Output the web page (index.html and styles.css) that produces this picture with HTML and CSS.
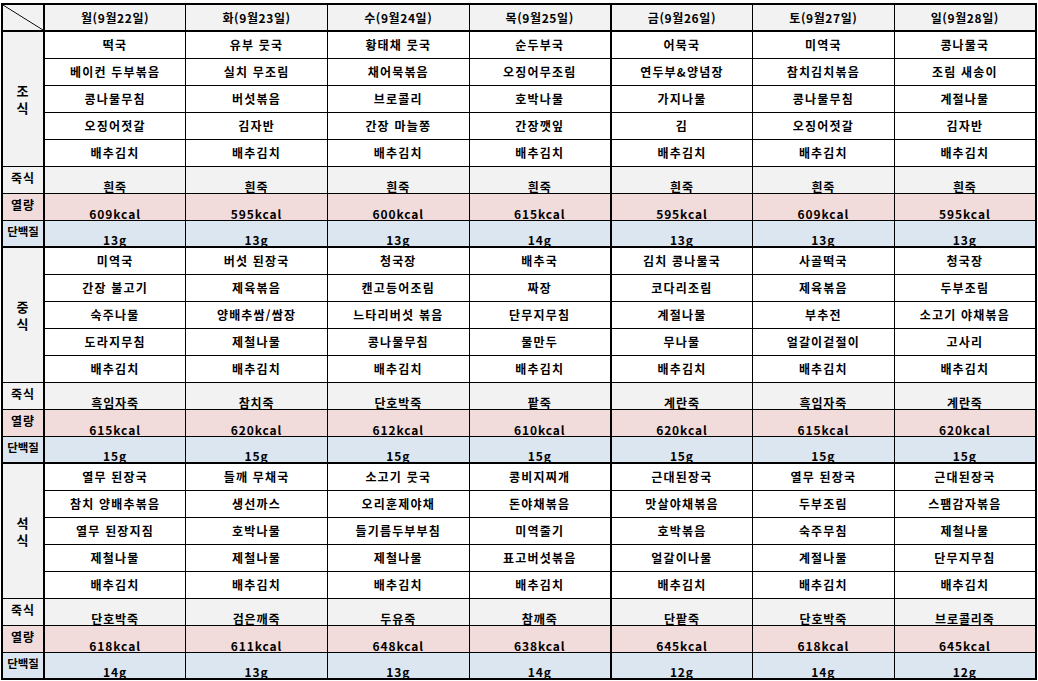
FILE: index.html
```html
<!DOCTYPE html>
<html lang="ko">
<head>
<meta charset="utf-8">
<title>주간 식단표</title>
<link rel="stylesheet" href="styles.css">
</head>
<body>
<table class="menu">
  <colgroup>
    <col class="c-lab">
    <col class="c-day"><col class="c-day"><col class="c-day"><col class="c-day"><col class="c-day"><col class="c-day"><col class="c-day">
  </colgroup>
  <thead>
    <tr class="head">
      <th class="corner"></th>
      <th>월(9월22일)</th><th>화(9월23일)</th><th>수(9월24일)</th><th class="mid">목(9월25일)</th><th>금(9월26일)</th><th>토(9월27일)</th><th>일(9월28일)</th>
    </tr>
  </thead>
  <tbody>
    <tr class="meal first">
      <td class="lab sec" rowspan="5">조<br>식</td>
      <td>떡국</td><td>유부 뭇국</td><td>황태채 뭇국</td><td class="mid">순두부국</td><td>어묵국</td><td>미역국</td><td>콩나물국</td>
    </tr>
    <tr class="meal"><td>베이컨 두부볶음</td><td>실치 무조림</td><td>채어묵볶음</td><td class="mid">오징어무조림</td><td>연두부&amp;양념장</td><td>참치김치볶음</td><td>조림 새송이</td></tr>
    <tr class="meal"><td>콩나물무침</td><td>버섯볶음</td><td>브로콜리</td><td class="mid">호박나물</td><td>가지나물</td><td>콩나물무침</td><td>계절나물</td></tr>
    <tr class="meal"><td>오징어젓갈</td><td>김자반</td><td>간장 마늘쫑</td><td class="mid">간장깻잎</td><td>김</td><td>오징어젓갈</td><td>김자반</td></tr>
    <tr class="meal"><td>배추김치</td><td>배추김치</td><td>배추김치</td><td class="mid">배추김치</td><td>배추김치</td><td>배추김치</td><td>배추김치</td></tr>
    <tr class="info porridge"><td class="lab">죽식</td><td><span>흰죽</span></td><td><span>흰죽</span></td><td><span>흰죽</span></td><td class="mid"><span>흰죽</span></td><td><span>흰죽</span></td><td><span>흰죽</span></td><td><span>흰죽</span></td></tr>
    <tr class="info kcal"><td class="lab">열량</td><td><span>609kcal</span></td><td><span>595kcal</span></td><td><span>600kcal</span></td><td class="mid"><span>615kcal</span></td><td><span>595kcal</span></td><td><span>609kcal</span></td><td><span>595kcal</span></td></tr>
    <tr class="info prot"><td class="lab">단백질</td><td><span>13g</span></td><td><span>13g</span></td><td><span>13g</span></td><td class="mid"><span>14g</span></td><td><span>13g</span></td><td><span>13g</span></td><td><span>13g</span></td></tr>

    <tr class="meal first">
      <td class="lab sec" rowspan="5">중<br>식</td>
      <td>미역국</td><td>버섯 된장국</td><td>청국장</td><td class="mid">배추국</td><td>김치 콩나물국</td><td>사골떡국</td><td>청국장</td>
    </tr>
    <tr class="meal"><td>간장 불고기</td><td>제육볶음</td><td>캔고등어조림</td><td class="mid">짜장</td><td>코다리조림</td><td>제육볶음</td><td>두부조림</td></tr>
    <tr class="meal"><td>숙주나물</td><td>양배추쌈/쌈장</td><td>느타리버섯 볶음</td><td class="mid">단무지무침</td><td>계절나물</td><td>부추전</td><td>소고기 야채볶음</td></tr>
    <tr class="meal"><td>도라지무침</td><td>제철나물</td><td>콩나물무침</td><td class="mid">물만두</td><td>무나물</td><td>얼갈이겉절이</td><td>고사리</td></tr>
    <tr class="meal"><td>배추김치</td><td>배추김치</td><td>배추김치</td><td class="mid">배추김치</td><td>배추김치</td><td>배추김치</td><td>배추김치</td></tr>
    <tr class="info porridge"><td class="lab">죽식</td><td><span>흑임자죽</span></td><td><span>참치죽</span></td><td><span>단호박죽</span></td><td class="mid"><span>팥죽</span></td><td><span>계란죽</span></td><td><span>흑임자죽</span></td><td><span>계란죽</span></td></tr>
    <tr class="info kcal"><td class="lab">열량</td><td><span>615kcal</span></td><td><span>620kcal</span></td><td><span>612kcal</span></td><td class="mid"><span>610kcal</span></td><td><span>620kcal</span></td><td><span>615kcal</span></td><td><span>620kcal</span></td></tr>
    <tr class="info prot"><td class="lab">단백질</td><td><span>15g</span></td><td><span>15g</span></td><td><span>15g</span></td><td class="mid"><span>15g</span></td><td><span>15g</span></td><td><span>15g</span></td><td><span>15g</span></td></tr>

    <tr class="meal first">
      <td class="lab sec" rowspan="5">석<br>식</td>
      <td>열무 된장국</td><td>들깨 무채국</td><td>소고기 뭇국</td><td class="mid">콩비지찌개</td><td>근대된장국</td><td>열무 된장국</td><td>근대된장국</td>
    </tr>
    <tr class="meal"><td>참치 양배추볶음</td><td>생선까스</td><td>오리훈제야채</td><td class="mid">돈야채볶음</td><td>맛살야채볶음</td><td>두부조림</td><td>스팸감자볶음</td></tr>
    <tr class="meal"><td>열무 된장지짐</td><td>호박나물</td><td>들기름두부부침</td><td class="mid">미역줄기</td><td>호박볶음</td><td>숙주무침</td><td>제철나물</td></tr>
    <tr class="meal"><td>제철나물</td><td>제철나물</td><td>제철나물</td><td class="mid">표고버섯볶음</td><td>얼갈이나물</td><td>계절나물</td><td>단무지무침</td></tr>
    <tr class="meal"><td>배추김치</td><td>배추김치</td><td>배추김치</td><td class="mid">배추김치</td><td>배추김치</td><td>배추김치</td><td>배추김치</td></tr>
    <tr class="info porridge"><td class="lab">죽식</td><td><span>단호박죽</span></td><td><span>검은깨죽</span></td><td><span>두유죽</span></td><td class="mid"><span>참깨죽</span></td><td><span>단팥죽</span></td><td><span>단호박죽</span></td><td><span>브로콜리죽</span></td></tr>
    <tr class="info kcal"><td class="lab">열량</td><td><span>618kcal</span></td><td><span>611kcal</span></td><td><span>648kcal</span></td><td class="mid"><span>638kcal</span></td><td><span>645kcal</span></td><td><span>618kcal</span></td><td><span>645kcal</span></td></tr>
    <tr class="info prot"><td class="lab">단백질</td><td><span>14g</span></td><td><span>13g</span></td><td><span>13g</span></td><td class="mid"><span>14g</span></td><td><span>12g</span></td><td><span>14g</span></td><td><span>12g</span></td></tr>
  </tbody>
</table>
</body>
</html>
```

FILE: styles.css
```css
html, body {
  margin: 0;
  padding: 0;
  background: #ffffff;
}

.menu {
  border-collapse: collapse;
  table-layout: fixed;
  width: 1036px;
  margin: 3px 0 0 1px;
  font-family: "Noto Sans CJK KR", "Noto Sans", sans-serif;
  font-weight: bold;
  font-size: 12px;
  letter-spacing: 1.2px;
  color: #000;
  border: 2px solid #000;
}

.c-lab { width: 42px; }

.menu th,
.menu td {
  border: 1px solid #000;
  padding: 0;
  text-align: center;
  vertical-align: middle;
  line-height: 14px;
  white-space: nowrap;
  overflow: hidden;
}

.menu tr { height: 27px; }

.menu th {
  background: #f2f2f2;
  font-weight: bold;
  letter-spacing: 0.6px;
  border-bottom: 2px solid #000;
}

.menu .corner {
  border-right: 2px solid #000;
  background-color: #f2f2f2;
  background-image: linear-gradient(to top right, transparent calc(50% - 0.8px), #000 50%, transparent calc(50% + 0.8px));
}

.menu .mid { border-right: 2px solid #000; }

.menu .lab {
  background: #f2f2f2;
  border-right: 2px solid #000;
  font-size: 12px;
  letter-spacing: 1px;
}

.menu .sec {
  line-height: 17px;
  font-size: 13px;
}

.menu .first td { border-top: 2px solid #000; }

.menu .info td {
  vertical-align: bottom;
  padding-bottom: 0;
  line-height: 13px;
  letter-spacing: 0.9px;
}

.menu .info td span {
  text-decoration: underline;
  text-underline-offset: 1px;
}

.menu .info td.lab {
  vertical-align: top;
  padding-top: 4px;
  line-height: 13px;
  letter-spacing: 1px;
}

.menu .porridge td { background: #f2f2f2; }
.menu .kcal td { background: #f2dcdb; }
.menu .prot td { background: #dce6f1; }
.menu .prot td.lab { font-size: 11.5px; letter-spacing: 0; }
```
